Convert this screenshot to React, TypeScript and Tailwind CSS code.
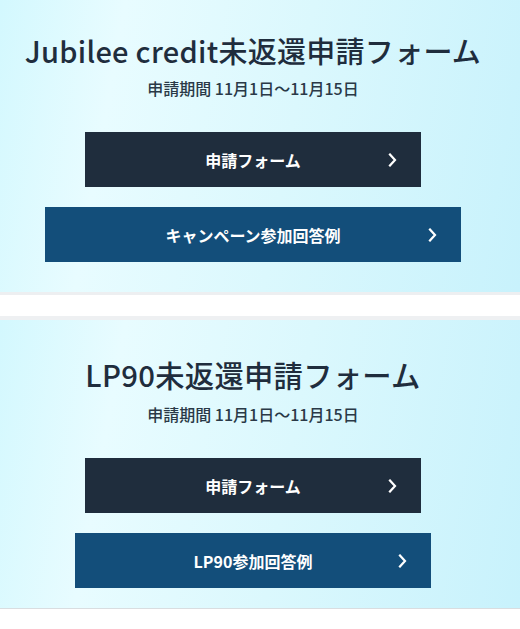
const font = "font-['Noto_Sans_CJK_JP','Noto_Sans',sans-serif]"

function Chevron() {
  return (
    <svg width="9" height="14" viewBox="0 0 9 14" className="absolute top-1/2 -translate-y-1/2 right-[24px]">
      <polyline points="2,1.5 7,7 2,12.5" fill="none" stroke="white" strokeWidth="2.2" strokeLinecap="square" />
    </svg>
  )
}

interface LinkButtonProps {
  label: string
  width: string
  dark?: boolean
}

function LinkButton({ label, width, dark }: LinkButtonProps) {
  return (
    <a
      href="#"
      className={`relative flex items-center justify-center h-[55px] ${width} ${dark ? 'bg-[#1f2d3d]' : 'bg-[#134e7a]'} text-white text-[16px] font-bold leading-none`}
    >
      <span>{label}</span>
      <Chevron />
    </a>
  )
}

export default function App() {
  return (
    <div className={`min-h-[629px] bg-white ${font}`}>
      {/* Jubilee credit */}
      <section className="flex flex-col items-center pr-[14px] pt-[30px] pb-[30px] border-b-[3px] border-[#edeff1] bg-[linear-gradient(100deg,#d3f8fe_0%,#e8fcff_22%,#dbf8fd_55%,#c8f2fc_100%)]">
        <h2 className="text-[29px] leading-[40px] font-medium text-[#1f2d3d] tracking-[0.01em] whitespace-nowrap">Jubilee credit未返還申請フォーム</h2>
        <p className="mt-[6px] text-[16px] leading-[24px] font-medium text-[#2a3947]">申請期間 11月1日〜11月15日</p>
        <div className="mt-[32px] flex flex-col items-center gap-[20px]">
          <LinkButton label="申請フォーム" width="w-[336px]" dark />
          <LinkButton label="キャンペーン参加回答例" width="w-[416px]" />
        </div>
      </section>

      {/* LP90 */}
      <section className="mt-[21px] flex flex-col items-center pr-[14px] pt-[34px] pb-[20px] border-t-[4px] border-b border-t-[#eef0f2] border-b-[#d9dde0] bg-[linear-gradient(100deg,#d3f8fe_0%,#e8fcff_22%,#dbf8fd_55%,#c8f2fc_100%)]">
        <h2 className="text-[29.3px] leading-[40px] font-medium text-[#1f2d3d] tracking-[0.01em] whitespace-nowrap">LP90未返還申請フォーム</h2>
        <p className="mt-[8px] text-[16px] leading-[24px] font-medium text-[#2a3947]">申請期間 11月1日〜11月15日</p>
        <div className="mt-[32px] flex flex-col items-center gap-[20px]">
          <LinkButton label="申請フォーム" width="w-[336px]" dark />
          <LinkButton label="LP90参加回答例" width="w-[356px]" />
        </div>
      </section>
    </div>
  )
}
